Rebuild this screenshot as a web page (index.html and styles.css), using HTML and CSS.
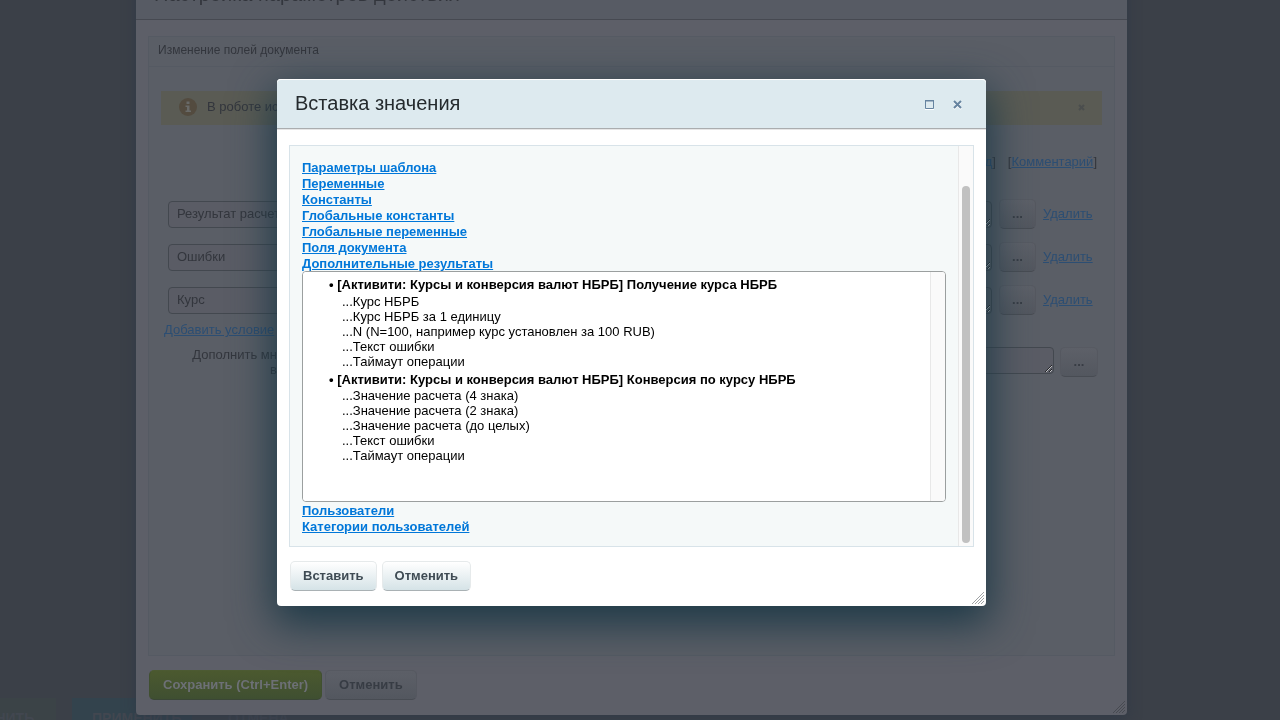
FILE: index.html
```html
<!DOCTYPE html>
<html lang="ru">
<head>
  <meta charset="UTF-8">
  <meta name="viewport" content="width=device-width, initial-scale=1.0">
  <title>Вставка значения</title>
  <link rel="stylesheet" href="styles.css">
</head>
<body>
  <!-- нижняя панель страницы -->
  <footer class="page-bar">
    <button type="button" class="bar-btn bar-save">СОХРАНИТЬ</button>
    <button type="button" class="bar-btn bar-apply">ПРИМЕНИТЬ</button>
    <button type="button" class="bar-btn">ОТМЕНА</button>
  </footer>

  <!-- окно настройки действия -->
  <div class="layer">
    <section class="dialog settings">
      <header class="dialog-head">
        <h1 class="dialog-title">Настройка параметров действия</h1>
      </header>
      <div class="settings-box">
        <h2 class="box-title">Изменение полей документа</h2>
        <div class="box-body">
          <div class="notice">
            <svg class="notice-icon" width="18" height="18" viewBox="0 0 18 18">
              <circle cx="9" cy="9" r="9" fill="#534b3f"/>
              <path d="M7.500 3.500h3v2.500h-3zM6.500 7.500h4v5h1.500v1.500H6.500v-1.500H8V9H6.500z" fill="#696a68"/>
            </svg>
            <span class="notice-text">В роботе ис</span>
            <svg width="7" height="7" viewBox="0 0 7 7"><path d="M1 1l5 5M6 1L1 6" stroke="#4b4e4e" stroke-width="2"/></svg>
          </div>
          <div class="modes">
            <span>[<a href="#">Код</a>]</span>
            <span>[<a href="#">Комментарий</a>]</span>
          </div>
          <div class="field-row">
            <select class="field" aria-label="Поле"><option>Результат расчета</option></select>
            <textarea class="field value" aria-label="Значение"></textarea>
            <button type="button" class="btn dots">...</button>
            <a href="#">Удалить</a>
          </div>
          <div class="field-row">
            <select class="field" aria-label="Поле"><option>Ошибки</option></select>
            <textarea class="field value" aria-label="Значение"></textarea>
            <button type="button" class="btn dots">...</button>
            <a href="#">Удалить</a>
          </div>
          <div class="field-row">
            <select class="field" aria-label="Поле"><option>Курс</option></select>
            <textarea class="field value" aria-label="Значение"></textarea>
            <button type="button" class="btn dots">...</button>
            <a href="#">Удалить</a>
          </div>
          <a class="add-link" href="#">Добавить условие</a>
          <div class="merge-row">
            <label class="merge-label" for="merge">Дополнить мн<br>в</label>
            <textarea class="field value" id="merge"></textarea>
            <button type="button" class="btn dots">...</button>
          </div>
        </div>
      </div>
      <div class="dialog-foot">
        <button type="button" class="btn btn-save">Сохранить (Ctrl+Enter)</button>
        <button type="button" class="btn">Отменить</button>
      </div>
      <svg class="grip" width="12" height="12" viewBox="0 0 12 12"><path d="M0 12L12 0M3 12L12 3M6 12L12 6M9 12L12 9"/></svg>
    </section>
  </div>

  <!-- окно вставки значения -->
  <div class="layer">
    <section class="dialog insert">
      <header class="dialog-head">
        <h1 class="dialog-title">Вставка значения</h1>
        <button type="button" class="icon-btn" aria-label="Развернуть">
          <svg width="10" height="10" viewBox="0 0 10 10"><path d="M0 9.500h9" stroke="#fff"/><path d="M.5 1v7.500h8V1" fill="none" stroke="#6684a0"/><path d="M0 .5h9" stroke="#6684a0"/><path d="M1 1.500h7" stroke="#a3b6c6"/></svg>
        </button>
        <button type="button" class="icon-btn" aria-label="Закрыть">
          <svg width="10" height="10" viewBox="0 0 10 10"><path d="M1 2l7 7M8 2L1 9" stroke="#fff" stroke-width="2"/><path d="M1 1l7 7M8 1L1 8" stroke="#6684a0" stroke-width="2"/></svg>
        </button>
      </header>
      <div class="insert-box">
        <div class="groups">
          <a href="#">Параметры шаблона</a>
          <a href="#">Переменные</a>
          <a href="#">Константы</a>
          <a href="#">Глобальные константы</a>
          <a href="#">Глобальные переменные</a>
          <a href="#">Поля документа</a>
          <a href="#">Дополнительные результаты</a>
          <div class="list-wrap">
            <select class="list" size="14" aria-label="Дополнительные результаты">
              <optgroup label="• [Активити: Курсы и конверсия валют НБРБ] Получение курса НБРБ">
                <option>...Курс НБРБ</option>
                <option>...Курс НБРБ за 1 единицу</option>
                <option>...N (N=100, например курс установлен за 100 RUB)</option>
                <option>...Текст ошибки</option>
                <option>...Таймаут операции</option>
              </optgroup>
              <optgroup label="• [Активити: Курсы и конверсия валют НБРБ] Конверсия по курсу НБРБ">
                <option>...Значение расчета (4 знака)</option>
                <option>...Значение расчета (2 знака)</option>
                <option>...Значение расчета (до целых)</option>
                <option>...Текст ошибки</option>
                <option>...Таймаут операции</option>
              </optgroup>
            </select>
            <div class="track"></div>
          </div>
          <a href="#">Пользователи</a>
          <a href="#">Категории пользователей</a>
        </div>
        <div class="track"><div class="thumb"></div></div>
      </div>
      <div class="dialog-foot">
        <button type="button" class="btn">Вставить</button>
        <button type="button" class="btn">Отменить</button>
      </div>
      <svg class="grip" width="12" height="12" viewBox="0 0 12 12"><path d="M0 12L12 0M3 12L12 3M6 12L12 6M9 12L12 9"/></svg>
    </section>
  </div>
</body>
</html>
```
FILE: styles.css
```css
* {
  box-sizing: border-box;
}

body {
  margin: 0;
  min-height: 100vh;
  display: flex;
  flex-direction: column;
  justify-content: flex-end;
  overflow: hidden;
  background: #3b4048;
  font-family: "Liberation Sans", Arial, sans-serif;
  font-size: 13px;
  line-height: 16px;
}

button,
select,
textarea {
  font: inherit;
}

/* нижняя панель */
.page-bar {
  display: flex;
  gap: 16px;
  height: 22px;
}

.bar-btn {
  height: 39px;
  padding: 0 20px;
  border: 0;
  background: none;
  color: #424750;
  font-size: 14px;
  font-weight: bold;
}

.bar-save {
  margin-left: -74px;
  width: 130px;
  background: #3b4347;
}

.bar-apply {
  width: 120px;
  background: #33434d;
}

/* окна */
.layer {
  position: fixed;
  inset: 0;
  display: flex;
  align-items: center;
  padding: 0 17px 35px 0;
}

.dialog {
  position: relative;
  flex: 1;
  min-width: 0;
  border-radius: 4px;
}

.dialog-head {
  display: flex;
  align-items: center;
  gap: 18px;
  height: 50px;
  padding: 0 23px 2px 18px;
  border-bottom: 1px solid #aaadaf;
  border-radius: 4px 4px 0 0;
}

.dialog-title {
  flex: 1;
  margin: 0;
  font-size: 20px;
  line-height: 24px;
  font-weight: normal;
}

.dialog-foot {
  display: flex;
  gap: 5px;
  padding: 14px 13px 15px;
}

.btn {
  height: 30px;
  padding: 0 13px;
  border: 1px solid #e6eaeb;
  border-bottom-color: #a9b1b4;
  border-radius: 5px;
  background: linear-gradient(#fff, #d5e3e7);
  color: #3f4b54;
  font-weight: bold;
}

.insert .btn {
  padding: 0 12px;
}

.icon-btn {
  display: flex;
  padding: 4px 0 0;
  border: 0;
  background: none;
}

.grip {
  position: absolute;
  right: 2px;
  bottom: 2px;
  stroke: #a0a3a5;
  shape-rendering: crispEdges;
}

/* окно настройки */
.settings {
  margin: 0 136px;
  background: #5d5f68;
  color: #33363d;
  box-shadow: 0 4px 14px rgba(48, 56, 70, 0.8);
}

.settings .dialog-head {
  background: #575b64;
  border-color: #464951;
}

.settings a {
  color: #2c4e73;
}

.settings-box {
  margin: 16px 12px 0;
  border: 1px solid #555a63;
  background: #5a5e66;
}

.box-title {
  margin: 0;
  padding: 5px 9px 8px;
  border-bottom: 1px solid #555a63;
  font-size: 12px;
  line-height: 16px;
  font-weight: normal;
}

.box-body {
  min-height: 588px;
  padding: 24px 12px 0;
}

.notice {
  display: flex;
  align-items: center;
  gap: 10px;
  height: 34px;
  padding: 0 17px 2px 18px;
  background: #5a5b54;
}

.notice-text {
  flex: 1;
}

.modes {
  display: flex;
  justify-content: flex-end;
  gap: 12px;
  margin: 29px 5px 0 0;
}

.field-row {
  display: grid;
  grid-template-columns: 1fr 1fr 37px 50px;
  gap: 7px;
  align-items: center;
  height: 30px;
  margin: 0 9px 13px 7px;
}

.modes + .field-row {
  margin-top: 29px;
}

.field {
  width: 100%;
  height: 27px;
  margin: 0;
  padding: 0 8px;
  border: 1px solid #43484f;
  border-radius: 4px;
  background: #5a5c65;
  color: inherit;
  appearance: none;
}

.settings .dots {
  padding: 0;
}

.settings .btn {
  border-color: #575a62 #555860 #484c53;
  background: linear-gradient(#5d6068, #53575f);
  color: #373c44;
}

.settings .btn-save {
  border-color: #4c5a32 #405030 #3a4636;
  background: linear-gradient(#4b592f, #3f4f31);
  color: #6d7076;
}

.add-link {
  display: block;
  margin: -6px 0 0 3px;
}

.merge-row {
  display: grid;
  grid-template-columns: 109px 1fr 38px;
  gap: 6px;
  margin: 9px 4px 0 7px;
}

.merge-label {
  line-height: 15px;
  text-align: right;
}

.settings .dialog-foot {
  gap: 3px;
}

.settings .grip {
  stroke: #474a51;
}

/* окно вставки */
.insert {
  margin: 0 277px;
  background: #fff;
  color: #000;
  box-shadow: 0 14px 42px 4px #1d3947;
}

.insert .dialog-head {
  background: #ddeaef;
  box-shadow: inset 0 1px #fff, 0 1px #e6e6e6;
  color: #252b2e;
}

.insert-box {
  display: flex;
  margin: 16px 12px 0;
  border: 1px solid #d8e3e9;
  background: #f5f9f9;
}

.groups {
  display: flex;
  flex: 1;
  flex-direction: column;
  align-items: flex-start;
  min-width: 0;
  padding: 14px 12px 11px;
}

.groups a {
  color: #0077d9;
  font-weight: bold;
}

.list-wrap {
  display: flex;
  align-self: stretch;
  height: 231px;
  margin: -1px 0 1px;
  overflow: hidden;
  border: 1px solid #9b9f9f;
  border-radius: 4px;
  background: #fff;
}

.list {
  flex: 1;
  min-width: 0;
  padding: 5px 0 0 24px;
  border: 0;
  outline: 0;
  background: #fff;
  color: #000;
  font-size: 13px;
  scrollbar-width: none;
}

.list optgroup {
  padding: 0;
}

.list optgroup + optgroup {
  margin-top: 3px;
}

.list option {
  height: 15px;
  min-height: 15px;
  padding: 0 0 0 15px;
  line-height: 15px;
}

.track {
  width: 15px;
  padding: 40px 3px 3px;
  border-left: 1px solid #e8e8e8;
  background: #fafafa;
}

.thumb {
  width: 8px;
  height: 100%;
  border-radius: 4px;
  background: #c1c1c1;
}
```
